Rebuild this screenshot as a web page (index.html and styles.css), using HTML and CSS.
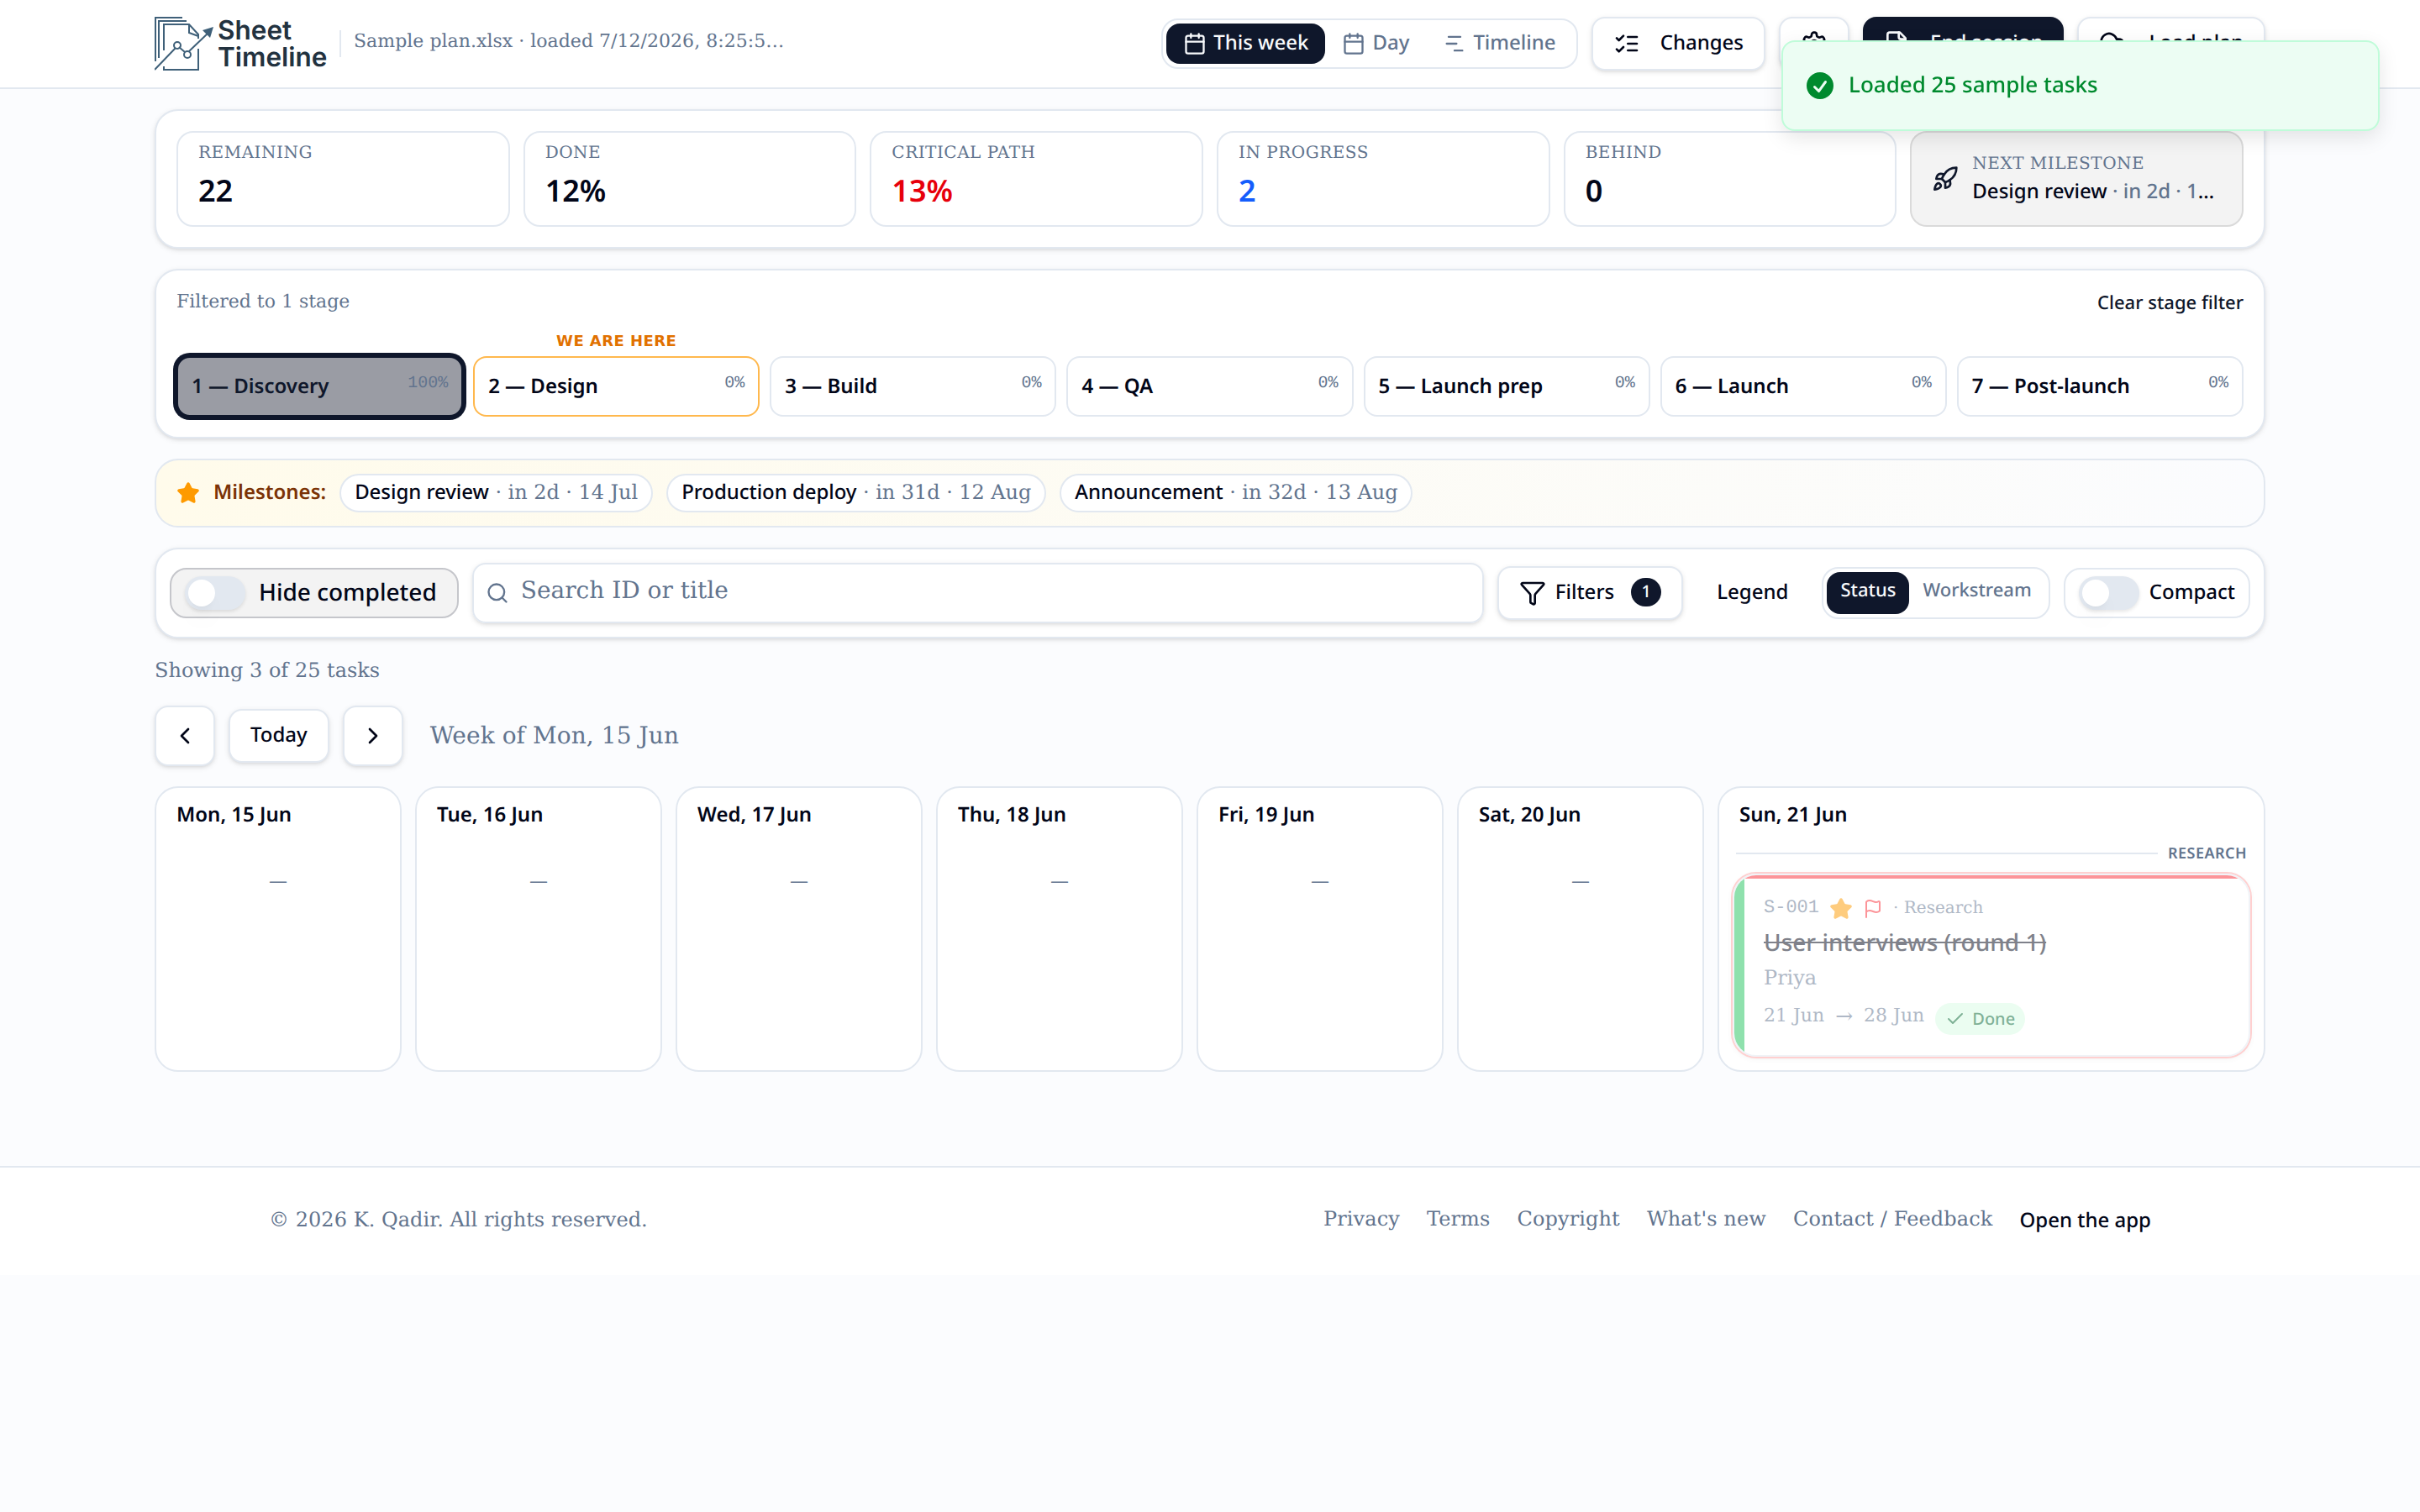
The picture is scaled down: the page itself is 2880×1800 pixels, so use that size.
FILE: index.html
```
<!DOCTYPE html>
<html lang="en">
  <head>
    <meta charset="UTF-8" />
    <title>Sheet Timeline</title>
    <link rel="stylesheet" href="styles.css">
  </head>
  <body>
    <svg class="sprite" aria-hidden="true">
      <symbol id="calendar" viewBox="0 0 24 24"><path d="M8 2v4M16 2v4M3 10h18"/><rect width="18" height="18" x="3" y="4" rx="2"/></symbol>
      <symbol id="gantt" viewBox="0 0 24 24"><path d="M6 5h12M4 12h10M12 19h8"/></symbol>
      <symbol id="checks" viewBox="0 0 24 24"><path d="m3 17 2 2 4-4M3 7l2 2 4-4M13 6h8M13 12h8M13 18h8"/></symbol>
      <symbol id="gear" viewBox="0 0 24 24"><path d="M12.22 2h-.44a2 2 0 0 0-2 2v.18a2 2 0 0 1-1 1.73l-.43.25a2 2 0 0 1-2 0l-.15-.08a2 2 0 0 0-2.73.73l-.22.38a2 2 0 0 0 .73 2.73l.15.1a2 2 0 0 1 1 1.72v.51a2 2 0 0 1-1 1.74l-.15.09a2 2 0 0 0-.73 2.73l.22.38a2 2 0 0 0 2.73.73l.15-.08a2 2 0 0 1 2 0l.43.25a2 2 0 0 1 1 1.73V20a2 2 0 0 0 2 2h.44a2 2 0 0 0 2-2v-.18a2 2 0 0 1 1-1.73l.43-.25a2 2 0 0 1 2 0l.15.08a2 2 0 0 0 2.73-.73l.22-.39a2 2 0 0 0-.73-2.73l-.15-.08a2 2 0 0 1-1-1.74v-.5a2 2 0 0 1 1-1.74l.15-.09a2 2 0 0 0 .73-2.73l-.22-.38a2 2 0 0 0-2.73-.73l-.15.08a2 2 0 0 1-2 0l-.43-.25a2 2 0 0 1-1-1.73V4a2 2 0 0 0-2-2z"/><circle cx="12" cy="12" r="3"/></symbol>
      <symbol id="file" viewBox="0 0 24 24"><path d="M15 2H6a2 2 0 0 0-2 2v16a2 2 0 0 0 2 2h12a2 2 0 0 0 2-2V7Z"/><path d="M14 2v4a2 2 0 0 0 2 2h4M9 15h6"/></symbol>
      <symbol id="cloud" viewBox="0 0 24 24"><path d="M12 13v8M4 14.899A7 7 0 1 1 15.71 8h1.79a4.5 4.5 0 0 1 2.5 8.242M8 17l4-4 4 4"/></symbol>
      <symbol id="rocket" viewBox="0 0 24 24"><path d="M4.5 16.5c-1.5 1.26-2 5-2 5s3.74-.5 5-2c.71-.84.7-2.13-.09-2.91a2.18 2.18 0 0 0-2.91-.09zM12 15l-3-3a22 22 0 0 1 2-3.95A12.88 12.88 0 0 1 22 2c0 2.72-.78 7.5-6 11a22.35 22.35 0 0 1-4 2z"/><path d="M9 12H4s.55-3.03 2-4c1.62-1.08 5 0 5 0M12 15v5s3.03-.55 4-2c1.08-1.62 0-5 0-5"/></symbol>
      <symbol id="star" viewBox="0 0 24 24"><path d="M11.525 2.295a.53.53 0 0 1 .95 0l2.31 4.679a2.12 2.12 0 0 0 1.595 1.16l5.166.756a.53.53 0 0 1 .294.904l-3.736 3.638a2.12 2.12 0 0 0-.611 1.878l.882 5.14a.53.53 0 0 1-.771.56l-4.618-2.428a2.12 2.12 0 0 0-1.973 0L6.396 21.01a.53.53 0 0 1-.77-.56l.881-5.139a2.12 2.12 0 0 0-.611-1.879L2.16 9.795a.53.53 0 0 1 .294-.906l5.165-.755a2.12 2.12 0 0 0 1.597-1.16z"/></symbol>
      <symbol id="search" viewBox="0 0 24 24"><circle cx="11" cy="11" r="8"/><path d="m21 21-4.3-4.3"/></symbol>
      <symbol id="funnel" viewBox="0 0 24 24"><path d="M10 20a1 1 0 0 0 .553.895l2 1A1 1 0 0 0 14 21v-7a2 2 0 0 1 .517-1.341L21.74 4.67A1 1 0 0 0 21 3H3a1 1 0 0 0-.742 1.67l7.225 7.989A2 2 0 0 1 10 14z"/></symbol>
      <symbol id="left" viewBox="0 0 24 24"><path d="m15 18-6-6 6-6"/></symbol>
      <symbol id="right" viewBox="0 0 24 24"><path d="m9 18 6-6-6-6"/></symbol>
      <symbol id="flag" viewBox="0 0 24 24"><path d="M4 22V4a1 1 0 0 1 .4-.8A6 6 0 0 1 8 2c3 0 5 2 7.333 2q2 0 3.067-.8A1 1 0 0 1 20 4v10a1 1 0 0 1-.4.8A6 6 0 0 1 16 16c-3 0-5-2-8-2a6 6 0 0 0-4 1.528"/></symbol>
      <symbol id="check" viewBox="0 0 24 24"><path d="M20 6 9 17l-5-5"/></symbol>
    </svg>

    <header class="topbar">
      <div class="container topbar-inner">
        <div class="logo">
          <svg class="logo-mark" viewBox="0 0 72 64" fill="none" stroke="#3f6079" stroke-width="2">
            <path d="M1 53V1h32M5 49V5h33M11 40V9h30l11 12v5M41 9v10l11 4M11 59v4h41V38"/>
            <path d="M0 63 25 37M29 36l7 6M41 41 64 19"/>
            <circle cx="27" cy="34" r="4"/><circle cx="39" cy="45" r="4"/>
            <path d="M70 12 57 16l9 9z" fill="#3f6079" stroke="none"/>
          </svg>
          <div class="logo-text">Sheet<br>Timeline</div>
        </div>
        <div class="divider"></div>
        <div class="file-info">Sample plan.xlsx · loaded 7/12/2026, 8:25:53 PM</div>
        <div class="segmented views">
          <button class="seg active"><svg class="icon sm"><use href="#calendar"/></svg>This week</button>
          <button class="seg"><svg class="icon sm"><use href="#calendar"/></svg>Day</button>
          <button class="seg"><svg class="icon sm"><use href="#gantt"/></svg>Timeline</button>
        </div>
        <button class="btn"><svg class="icon"><use href="#checks"/></svg>Changes</button>
        <button class="btn"><svg class="icon"><use href="#gear"/></svg></button>
        <button class="btn primary"><svg class="icon"><use href="#file"/></svg>End session</button>
        <button class="btn load"><svg class="icon"><use href="#cloud"/></svg>Load plan</button>
      </div>
    </header>

    <main class="container">
      <section class="card stats">
        <div class="stat"><div class="stat-label">Remaining</div><div class="stat-value">22</div></div>
        <div class="stat"><div class="stat-label">Done</div><div class="stat-value">12%</div></div>
        <div class="stat"><div class="stat-label">Critical path</div><div class="stat-value red">13%</div></div>
        <div class="stat"><div class="stat-label">In progress</div><div class="stat-value blue">2</div></div>
        <div class="stat"><div class="stat-label">Behind</div><div class="stat-value">0</div></div>
        <div class="stat next">
          <svg class="icon"><use href="#rocket"/></svg>
          <div class="next-body">
            <div class="stat-label">Next milestone</div>
            <div class="next-name">Design review <span>· in 2d · 14 Jul</span></div>
          </div>
        </div>
      </section>

      <section class="card stages">
        <div class="stages-head"><span class="muted">Filtered to 1 stage</span><button class="link">Clear stage filter</button></div>
        <div class="stage-row">
          <div class="stage selected"><span>1 — Discovery</span><span class="pct">100%</span></div>
          <div class="stage here"><div class="here-label">We are here</div><span>2 — Design</span><span class="pct">0%</span></div>
          <div class="stage"><span>3 — Build</span><span class="pct">0%</span></div>
          <div class="stage"><span>4 — QA</span><span class="pct">0%</span></div>
          <div class="stage"><span>5 — Launch prep</span><span class="pct">0%</span></div>
          <div class="stage"><span>6 — Launch</span><span class="pct">0%</span></div>
          <div class="stage"><span>7 — Post-launch</span><span class="pct">0%</span></div>
        </div>
      </section>

      <section class="milestones">
        <svg class="icon sm star"><use href="#star"/></svg>
        <span class="milestones-title">Milestones:</span>
        <div class="chip"><b>Design review</b> · in 2d · 14 Jul</div>
        <div class="chip"><b>Production deploy</b> · in 31d · 12 Aug</div>
        <div class="chip"><b>Announcement</b> · in 32d · 13 Aug</div>
      </section>

      <section class="card toolbar">
        <label class="toggle hide-done"><span class="switch"></span>Hide completed</label>
        <div class="search"><svg class="icon sm"><use href="#search"/></svg><span>Search ID or title</span></div>
        <button class="btn filters"><svg class="icon"><use href="#funnel"/></svg>Filters<span class="count">1</span></button>
        <button class="legend">Legend</button>
        <div class="segmented color-by">
          <button class="seg active">Status</button>
          <button class="seg">Workstream</button>
        </div>
        <label class="toggle"><span class="switch"></span>Compact</label>
      </section>

      <p class="showing">Showing 3 of 25 tasks</p>

      <div class="week-nav">
        <button class="btn arrow"><svg class="icon"><use href="#left"/></svg></button>
        <button class="btn today">Today</button>
        <button class="btn arrow"><svg class="icon"><use href="#right"/></svg></button>
        <span class="week-label">Week of Mon, 15 Jun</span>
      </div>

      <section class="week">
        <div class="day"><h3>Mon, 15 Jun</h3><div class="empty">—</div></div>
        <div class="day"><h3>Tue, 16 Jun</h3><div class="empty">—</div></div>
        <div class="day"><h3>Wed, 17 Jun</h3><div class="empty">—</div></div>
        <div class="day"><h3>Thu, 18 Jun</h3><div class="empty">—</div></div>
        <div class="day"><h3>Fri, 19 Jun</h3><div class="empty">—</div></div>
        <div class="day"><h3>Sat, 20 Jun</h3><div class="empty">—</div></div>
        <div class="day">
          <h3>Sun, 21 Jun</h3>
          <div class="lane"><hr><span>Research</span></div>
          <article class="task">
            <div class="task-meta">
              <span class="task-id">S-001</span>
              <svg class="icon sm star"><use href="#star"/></svg>
              <svg class="icon xs flag"><use href="#flag"/></svg>
              <span class="task-lane">· Research</span>
            </div>
            <div class="task-title">User interviews (round 1)</div>
            <div class="task-owner">Priya</div>
            <div class="task-dates">
              <span>21 Jun</span><span class="to">→</span><span>28 Jun</span>
              <span class="done"><svg class="icon xs"><use href="#check"/></svg>Done</span>
            </div>
          </article>
        </div>
      </section>
    </main>

    <footer class="footer">
      <div class="footer-inner">
        <span>© 2026 K. Qadir. All rights reserved.</span>
        <nav>
          <a>Privacy</a>
          <a>Terms</a>
          <a>Copyright</a>
          <a>What's new</a>
          <a>Contact / Feedback</a>
          <a class="open-app">Open the app</a>
        </nav>
      </div>
    </footer>

    <div class="toast">
      <svg viewBox="0 0 20 20" fill="currentColor"><path fill-rule="evenodd" d="M10 18a8 8 0 100-16 8 8 0 000 16zm3.857-9.809a.75.75 0 00-1.214-.882l-3.483 4.79-1.88-1.88a.75.75 0 10-1.06 1.061l2.5 2.5a.75.75 0 001.137-.089l4-5.5z" clip-rule="evenodd"/></svg>
      <span>Loaded 25 sample tasks</span>
    </div>
  </body>
</html>
```
FILE: styles.css
```
:root {
  --ink: #020618;
  --primary: #0f172b;
  --muted: #62748e;
  --border: #e2e8f0;
  --sans: "Noto Sans", sans-serif;
  --serif: "DejaVu Serif", serif;
  --mono: "Liberation Mono", monospace;
  --shadow: 0 2px 6px rgba(0, 0, 0, 0.1), 0 2px 4px -2px rgba(0, 0, 0, 0.1);
}
* {
  box-sizing: border-box;
}
body {
  margin: 0;
  background: #fbfcfe;
  color: var(--ink);
  font-family: var(--serif);
  font-size: 24px;
  line-height: 32px;
  text-rendering: geometricPrecision;
}
button {
  font: 500 24px/32px var(--sans);
  text-rendering: inherit;
  color: var(--ink);
  background: none;
  border: 0;
  padding: 0;
  white-space: nowrap;
}
.sprite {
  display: none;
}
.icon {
  width: 32px;
  height: 32px;
  flex: none;
  fill: none;
  stroke: currentColor;
  stroke-width: 2;
  stroke-linecap: round;
  stroke-linejoin: round;
}
.icon.sm {
  width: 28px;
  height: 28px;
}
.icon.xs {
  width: 24px;
  height: 24px;
}
/* labels sit a pixel above the icon centre */
.btn .icon,
.seg .icon {
  margin-top: 2px;
}
.container {
  width: 2512px;
  margin: 0 auto;
}
.card {
  background: #fff;
  border: 2px solid var(--border);
  border-radius: 28px;
  box-shadow: var(--shadow);
}

/* header */
.topbar {
  height: 106px;
  background: #fff;
  border-bottom: 2px solid var(--border);
}
.topbar-inner {
  height: 104px;
  display: flex;
  align-items: center;
  gap: 16px;
}
.logo {
  display: flex;
  width: 204px;
  height: 64px;
}
.logo-mark {
  width: 72px;
  height: 64px;
  flex: none;
}
.logo-text {
  margin-left: 3px;
  font: 600 31.5px/32px Inter, sans-serif;
  color: #22323f;
}
.divider {
  width: 2px;
  height: 32px;
  background: var(--border);
}
.file-info {
  width: 514px;
  margin: 0 0 5px -1px;
  font-size: 22px;
  letter-spacing: 0.03px;
  color: var(--muted);
  white-space: nowrap;
  overflow: hidden;
  text-overflow: ellipsis;
}
.segmented {
  display: flex;
  padding: 4px;
  border: 2px solid var(--border);
  border-radius: 20px;
  background: #fff;
}
.seg {
  display: flex;
  align-items: center;
  gap: 8px;
  padding: 7px 20px 9px;
  border-radius: 16px;
  color: var(--muted);
}
.seg.active {
  background: var(--primary);
  color: #f8fafc;
}
.views {
  margin-left: auto;
}
.btn {
  height: 64px;
  display: flex;
  align-items: center;
  justify-content: center;
  gap: 24px;
  padding: 0 24px 2px;
  border: 2px solid var(--border);
  border-radius: 16px;
  background: #fff;
  box-shadow: var(--shadow);
}
.btn.primary {
  background: var(--primary);
  border: 0;
  color: #f8fafc;
}
.btn.load {
  gap: 28px;
}

/* stats */
.stats {
  margin-top: 24px;
  height: 166px;
  padding: 24px;
  display: grid;
  grid-template-columns: repeat(6, 1fr);
  gap: 16px;
}
.stat {
  min-width: 0;
  height: 114px;
  padding: 8px 24px;
  border: 2px solid var(--border);
  border-radius: 20px;
}
.stat-label {
  font-size: 20px;
  line-height: 30px;
  letter-spacing: 0.025em;
  text-transform: uppercase;
  color: var(--muted);
}
.stat-value {
  font: 600 36px/56px var(--sans);
  margin-top: 3px;
}
.red {
  color: #e7000b;
}
.blue {
  color: #155dfc;
}
.next {
  display: flex;
  align-items: center;
  gap: 16px;
  background: #f3f3f3;
  border-color: #dadada;
}
.next .icon {
  color: var(--primary);
}
.next-body {
  min-width: 0;
  margin-bottom: 2px;
}
.next-name {
  font: 500 24px/37px var(--sans);
  white-space: nowrap;
  overflow: hidden;
  text-overflow: ellipsis;
}
.next-name span {
  color: var(--muted);
}

/* stages */
.stages {
  margin-top: 24px;
  height: 202px;
  padding: 24px;
}
.stages-head {
  height: 78px;
  display: flex;
  justify-content: space-between;
}
.muted {
  font-size: 22px;
  line-height: 28px;
  color: var(--muted);
}
.link {
  font-size: 22px;
  height: 28px;
  line-height: 28px;
  color: var(--primary);
}
.stage-row {
  display: grid;
  grid-template-columns: repeat(7, 1fr);
  gap: 12px;
}
.stage {
  position: relative;
  height: 72px;
  display: flex;
  align-items: center;
  justify-content: space-between;
  padding: 0 16px;
  border: 2px solid var(--border);
  border-radius: 16px;
  font: 600 24px/32px var(--sans);
}
.stage.selected {
  background: #9a9ca4;
  border-color: var(--primary);
  box-shadow: 0 0 0 4px var(--primary);
  color: var(--primary);
}
.stage.here {
  border-color: #ffb84d;
}
.pct {
  font: 20px/28px var(--mono);
  color: var(--muted);
  margin-bottom: 7px;
}
.here-label {
  position: absolute;
  top: -31px;
  left: 0;
  right: 0;
  text-align: center;
  font: bold 18px/24px "DejaVu Sans", sans-serif;
  letter-spacing: 0.025em;
  text-transform: uppercase;
  color: #e17100;
}

/* milestones */
.milestones {
  margin-top: 24px;
  height: 82px;
  padding: 0 24px;
  display: flex;
  align-items: center;
  gap: 16px;
  border: 2px solid var(--border);
  border-radius: 28px;
  background: linear-gradient(90deg, #fffbeb, #fbfcfe);
}
.star {
  fill: #fe9a00;
  color: #fe9a00;
}
.milestones-title {
  margin-bottom: 3px;
  font: 600 24px/32px var(--sans);
  color: #7b3306;
}
.chip {
  height: 46px;
  padding: 4px 16px;
  border: 2px solid var(--border);
  border-radius: 23px;
  background: #fff;
  color: var(--muted);
  letter-spacing: -0.05px;
  white-space: nowrap;
}
.chip b {
  font: 500 24px/32px var(--sans);
  color: var(--ink);
}

/* toolbar */
.toolbar {
  margin-top: 24px;
  height: 108px;
  padding: 0 16px;
  display: flex;
  align-items: center;
  gap: 16px;
}
.toggle {
  height: 60px;
  display: flex;
  align-items: center;
  gap: 12px;
  padding: 0 16px 2px;
  border: 2px solid var(--border);
  border-radius: 20px;
  font: 500 24px/32px var(--sans);
  white-space: nowrap;
}
.hide-done {
  gap: 16px;
  padding-right: 24px;
  padding-bottom: 3px;
  font-size: 28px;
  background: #f3f3f3;
  border-color: #c5c6cb;
}
.switch {
  width: 72px;
  height: 40px;
  margin-top: 2px;
  padding: 4px;
  border-radius: 20px;
  background: var(--border);
  box-shadow: 0 2px 4px rgba(0, 0, 0, 0.1);
}
.switch::before {
  content: "";
  display: block;
  width: 32px;
  height: 32px;
  border-radius: 50%;
  background: #fff;
  box-shadow: 0 20px 30px -6px rgba(0, 0, 0, 0.05), 0 8px 12px -8px rgba(0, 0, 0, 0.1);
}
.search {
  flex: 1;
  height: 72px;
  display: flex;
  align-items: center;
  gap: 14px;
  padding: 0 14px;
  border: 2px solid var(--border);
  border-radius: 16px;
  box-shadow: var(--shadow);
  font-size: 28px;
  color: var(--muted);
}
.search span {
  margin-bottom: 7px;
}
.filters {
  gap: 11px;
}
.count {
  width: 36px;
  height: 34px;
  margin-left: 9px;
  border-radius: 17px;
  background: var(--primary);
  color: #f8fafc;
  font-size: 20px;
}
.legend {
  padding: 0 24px 2px;
}
.color-by {
  height: 62px;
}
.color-by .seg {
  height: 50px;
  padding: 0 16px 9px;
  font-size: 22px;
}

.showing {
  margin: 22px 0 26px;
  line-height: 32px;
  color: var(--muted);
}

/* week */
.week-nav {
  display: flex;
  align-items: center;
  gap: 16px;
  height: 72px;
}
.arrow {
  width: 72px;
  height: 72px;
  padding: 0 0 2px;
}
.week-label {
  margin-left: 16px;
  font-size: 28px;
  letter-spacing: 0.08px;
  color: var(--muted);
}
.week {
  margin-top: 24px;
  display: grid;
  grid-template-columns: repeat(6, 294px) 1fr;
  gap: 16px;
}
.day {
  height: 340px;
  padding: 16px;
  border: 2px solid var(--border);
  border-radius: 28px;
  background: #fff;
}
.day h3 {
  margin: 0 8px;
  font: 600 24px/32px var(--sans);
}
.empty {
  margin-top: 48px;
  text-align: center;
  font-size: 22px;
  color: var(--muted);
}
.lane {
  display: flex;
  align-items: center;
  gap: 12px;
  margin: 18px 4px 0;
  height: 24px;
}
.lane hr {
  flex: 1;
  margin: 0;
  border: 0;
  height: 2px;
  background: var(--border);
}
.lane span {
  font: 600 18px/24px var(--sans);
  letter-spacing: 0.025em;
  text-transform: uppercase;
  color: var(--muted);
}
.task {
  position: relative;
  height: 218px;
  margin-top: 12px;
  padding: 24px 35px;
  border: 2px solid var(--border);
  border-radius: 28px;
  box-shadow: 0 0 0 2px #ffa2a2, var(--shadow);
  overflow: hidden;
  opacity: 0.5;
  color: var(--muted);
}
.task::before {
  content: "";
  position: absolute;
  inset: 0 auto 0 0;
  width: 12px;
  background: #22c55e;
}
.task::after {
  content: "";
  position: absolute;
  inset: 0 0 auto 0;
  height: 4px;
  background: #fb2c36;
}
.task-meta {
  display: flex;
  align-items: center;
  gap: 12px;
  height: 32px;
  font-size: 20px;
}
.task-id {
  margin-bottom: 3px;
  font: 22px/28px var(--mono);
}
.task-lane {
  margin-bottom: 4px;
}
.flag {
  color: #fb2c36;
}
.task-title {
  margin-top: 4px;
  font: 500 28px/40px var(--sans);
  color: var(--ink);
  text-decoration: line-through;
}
.task-owner {
  margin-top: 6px;
}
.task-dates {
  display: flex;
  gap: 13px;
  margin-top: 14px;
  font-size: 22px;
}
.task-dates .to {
  font-size: 25px;
}
.done {
  display: flex;
  align-items: center;
  gap: 8px;
  height: 38px;
  padding: 0 12px;
  border-radius: 19px;
  background: #d8fde4;
  color: #016630;
  font: 500 20px/28px var(--sans);
}

/* footer */
.footer {
  margin-top: 112px;
  height: 130px;
  border-top: 2px solid var(--border);
  background: #fff;
  color: var(--muted);
}
.footer-inner {
  width: 2240px;
  height: 124px;
  margin: 0 auto;
  display: flex;
  align-items: center;
  justify-content: space-between;
  letter-spacing: 0.05px;
}
.footer nav {
  display: flex;
  gap: 32px;
  letter-spacing: 0.12px;
}
.open-app {
  font: 500 24px/35px var(--sans);
  letter-spacing: 0;
  color: var(--ink);
}

.toast {
  position: fixed;
  top: 48px;
  right: 48px;
  width: 712px;
  height: 108px;
  display: flex;
  align-items: center;
  gap: 14px;
  padding: 0 24px;
  border: 2px solid #bffcd9;
  border-radius: 16px;
  background: #ecfdf3;
  box-shadow: 0 8px 24px rgba(0, 0, 0, 0.1);
  color: #008a2e;
  font: 500 26px/40px var(--sans);
}
.toast span {
  margin-bottom: 4px;
}
.toast svg {
  width: 40px;
  height: 40px;
}
```
